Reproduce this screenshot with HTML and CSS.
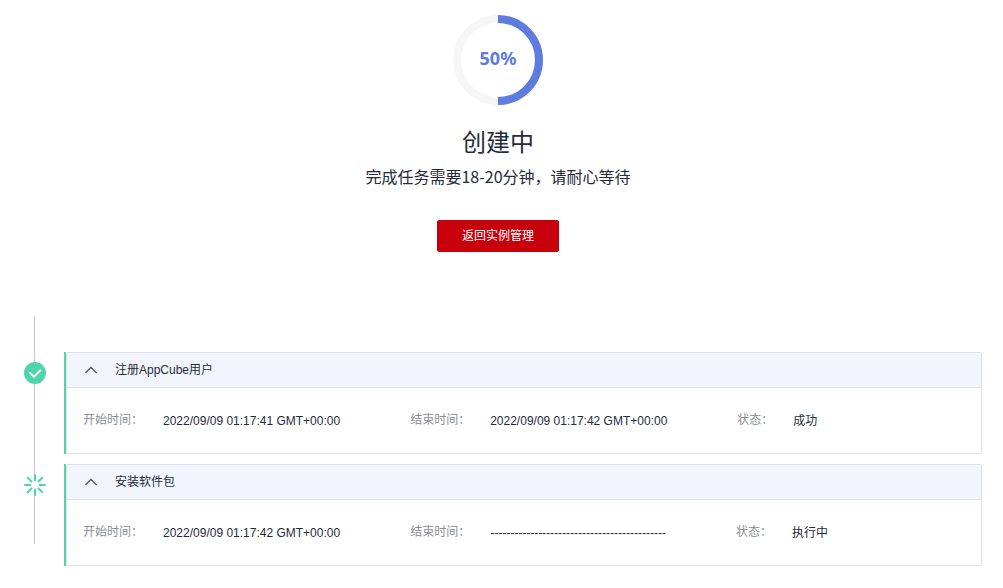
FILE: index.html
```html
<!DOCTYPE html>
<html lang="zh-CN">
<head>
<meta charset="UTF-8" />
<meta name="viewport" content="width=device-width, initial-scale=1" />
<title>创建中</title>
<link rel="stylesheet" href="styles.css">
</head>
<body>
  <main class="page">
    <section class="summary">
      <div class="ring">
        <svg viewBox="0 0 90 90" aria-hidden="true">
          <circle class="ring-track" cx="45" cy="45" r="41" />
          <path class="ring-value" d="M45 4a41 41 0 0 1 0 82" />
        </svg>
        <span class="ring-text">50%</span>
      </div>
      <h1 class="title">创建中</h1>
      <p class="hint">完成任务需要18-20分钟，请耐心等待</p>
      <button class="btn" type="button">返回实例管理</button>
    </section>

    <ol class="timeline">
      <li class="step">
        <svg class="step-icon" viewBox="0 0 22 22" aria-hidden="true">
          <circle cx="11" cy="11" r="11" fill="#50d4ab" />
          <path d="M5.500 10.500l4.500 4.200 6.800-6.700" fill="none" stroke="#fff" stroke-width="1.800" />
        </svg>
        <div class="step-main">
          <div class="card">
            <button class="card-head" type="button" aria-expanded="true">
              <svg class="chevron" viewBox="0 0 14 8" aria-hidden="true"><path d="M1.300 7L7 1.500 12.700 7" /></svg>
              注册AppCube用户
            </button>
            <dl class="card-body">
              <div class="field"><dt>开始时间：</dt><dd>2022/09/09 01:17:41 GMT+00:00</dd></div>
              <div class="field"><dt>结束时间：</dt><dd>2022/09/09 01:17:42 GMT+00:00</dd></div>
              <div class="field"><dt>状态：</dt><dd>成功</dd></div>
            </dl>
          </div>
        </div>
      </li>
      <li class="step">
        <svg class="step-icon loading" viewBox="0 0 22 22" aria-hidden="true">
          <path d="M11 1v5.500M11 15.500v5.500M1 11h5.500M15.500 11h5.500M3.700 3.700l3.800 3.800M14.500 14.500l3.800 3.800M3.700 18.300l3.800-3.800M14.500 7.500l3.800-3.800" fill="none" stroke="#50d4ab" stroke-width="2" stroke-linecap="round" />
        </svg>
        <div class="step-main">
          <div class="card">
            <button class="card-head" type="button" aria-expanded="true">
              <svg class="chevron" viewBox="0 0 14 8" aria-hidden="true"><path d="M1.300 7L7 1.500 12.700 7" /></svg>
              安装软件包
            </button>
            <dl class="card-body">
              <div class="field"><dt>开始时间：</dt><dd>2022/09/09 01:17:42 GMT+00:00</dd></div>
              <div class="field"><dt>结束时间：</dt><dd>--------------------------------------------</dd></div>
              <div class="field"><dt>状态：</dt><dd>执行中</dd></div>
            </dl>
          </div>
        </div>
      </li>
    </ol>
  </main>
</body>
</html>
```
FILE: styles.css
```css
:root{
  --text:#252b3a;
  --muted:#8a8e99;
  --line:#dfe1e6;
  --head:#f2f5fc;
  --green:#50d4ab;
  --blue:#5e7ce0;
  --red:#c7000b;
}
*{box-sizing:border-box}
body{
  margin:0;
  background:#fff;
  color:var(--text);
  font:12px/18px "Liberation Sans", "Noto Sans CJK SC", sans-serif;
}
.page{padding:15px 21px 22px 14px}

.summary{
  display:flex;
  flex-direction:column;
  align-items:center;
}
.ring{
  display:grid;
  place-items:center;
  width:90px;
  height:90px;
}
.ring > *{grid-area:1 / 1}
.ring svg{display:block; width:100%; height:100%}
.ring circle, .ring path{fill:none; stroke-width:8}
.ring-track{stroke:#f6f6f6}
.ring-value{stroke:var(--blue)}
.ring-text{
  padding-bottom:4px;
  color:var(--blue);
  font:bold 18px/24px "Noto Sans", "Open Sans", sans-serif;
}
.title{
  margin:20px 0 0;
  font-size:24px;
  font-weight:400;
  line-height:36px;
}
.hint{
  margin:3px 0 0;
  font-family:"Noto Sans CJK SC", sans-serif;
  font-size:16px;
  line-height:24px;
}
.btn{
  height:32px;
  margin-top:32px;
  padding:0 24px;
  border:1px solid var(--red);
  border-radius:2px;
  background:var(--red);
  color:#fff;
  font:inherit;
  cursor:pointer;
}

/* steps on a vertical line */
.timeline{
  position:relative;
  display:grid;
  gap:10px;
  margin:64px 0 0;
  padding:36px 0 0 10px;
  list-style:none;
}
.timeline::before{
  content:"";
  position:absolute;
  top:0; bottom:22px; left:20px;
  width:1px;
  background:#c8c8c8;
}
.step{
  display:grid;
  grid-template-columns:22px 1fr;
  column-gap:18px;
}
.step-icon{
  position:relative;
  width:22px;
  height:22px;
  margin-top:10px;
}
.loading{background:#fff}
.step-main{border-left:2px solid var(--green)}
.card{
  border:1px solid var(--line);
  border-radius:2px;
}
.card-head{
  display:flex;
  align-items:center;
  gap:17px;
  width:100%;
  height:35px;
  padding:0 17px;
  border:0;
  border-bottom:1px solid var(--line);
  background:var(--head);
  color:var(--text);
  font:inherit;
  text-align:left;
  cursor:pointer;
}
.chevron{
  width:14px;
  height:8px;
  fill:none;
  stroke:#575d6c;
  stroke-width:1.6;
}
.card-body{
  display:flex;
  flex-wrap:wrap;
  gap:10px 70px;
  margin:0;
  padding:23px 16px;
}
.field{display:flex; gap:20px}
.field dt{color:var(--muted)}
.field dd{margin:0; padding-top:1px}
```
